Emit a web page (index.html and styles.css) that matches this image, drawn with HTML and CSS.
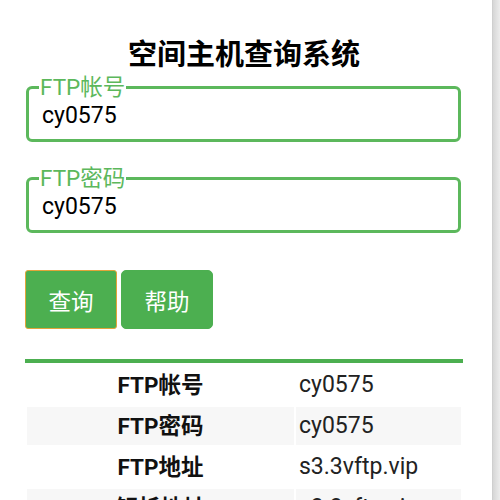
FILE: index.html
```html
<!DOCTYPE html>
<html lang="zh-CN">
<head>
  <meta charset="UTF-8">
  <meta name="viewport" content="width=device-width, initial-scale=1.0">
  <title>空间主机查询系统</title>
  <link rel="stylesheet" href="styles.css">
</head>
<body>
  <div class="page">
    <div class="container">
      <h1>空间主机查询系统</h1>

      <fieldset class="field">
        <legend>FTP帐号</legend>
        <input type="text" value="cy0575">
      </fieldset>
      <fieldset class="field">
        <legend>FTP密码</legend>
        <input type="text" value="cy0575">
      </fieldset>

      <div class="actions">
        <button class="btn focused">查询</button><button class="btn">帮助</button>
      </div>

      <table class="result">
        <tr><th>FTP帐号</th><td>cy0575</td></tr>
        <tr><th>FTP密码</th><td>cy0575</td></tr>
        <tr><th>FTP地址</th><td>s3.3vftp.vip</td></tr>
        <tr><th>解析地址</th><td>s3.3vftp.vip</td></tr>
      </table>
    </div>
    <div class="scrollbar"></div>
  </div>
</body>
</html>
```

FILE: styles.css
```css
body {
  margin: 0;
  font-family: Roboto, "Noto Sans CJK SC", sans-serif;
  color: #111;
  background: #fff;
}
.page {
  display: flex;
  width: 500px;
}
.container {
  width: 438px;
  padding: 0 29px 0 25px;
}
.scrollbar {
  width: 7px;
  background: linear-gradient(to right, #d6d6d6, #ececec);
  border-left: 1px solid #cfcfcf;
}
h1 {
  font-family: "Noto Sans CJK SC", sans-serif;
  font-size: 29px;
  font-weight: bold;
  text-align: center;
  line-height: 40px;
  margin: 32px 0 4px;
  color: #000;
}
.field {
  margin: 0 2px 0 1px;
  border: 3px solid #5cb85c;
  border-radius: 6px;
  padding: 3px 10px 10px;
}
.field + .field {
  margin-top: 25px;
}
.field legend {
  color: #5cb85c;
  font-size: 22.5px;
  line-height: 22px;
  padding: 0 1px;
}
.field input {
  display: block;
  width: 100%;
  border: none;
  outline: none;
  background: transparent;
  font-family: Roboto, sans-serif;
  font-size: 23px;
  color: #000;
  padding: 0 3px;
  height: 28px;
}
.actions {
  margin-top: 37px;
}
.btn {
  width: 92px;
  height: 59px;
  border: 1px solid #4caf50;
  border-radius: 5px;
  background-color: #4caf50;
  color: #fff;
  font-family: "Noto Sans CJK SC", sans-serif;
  font-size: 22.5px;
  margin-right: 4px;
  cursor: pointer;
}
.btn.focused {
  border-color: #e3a43a;
  border-radius: 3px;
}
.result {
  margin-top: 30px;
  width: 438px;
  border-collapse: separate;
  border-spacing: 2px 3px;
  border-top: 4px solid #4caf50;
  font-size: 22.5px;
  line-height: 28px;
}
.result th, .result td {
  height: 38px;
  padding: 0;
}
.result th {
  width: 267px;
  text-align: center;
  font-weight: bold;
}
.result td {
  text-align: left;
  padding-left: 3px;
  font-size: 23px;
  color: #222;
}
.result tr:nth-child(even) th,
.result tr:nth-child(even) td {
  background: #f7f7f7;
}
```
